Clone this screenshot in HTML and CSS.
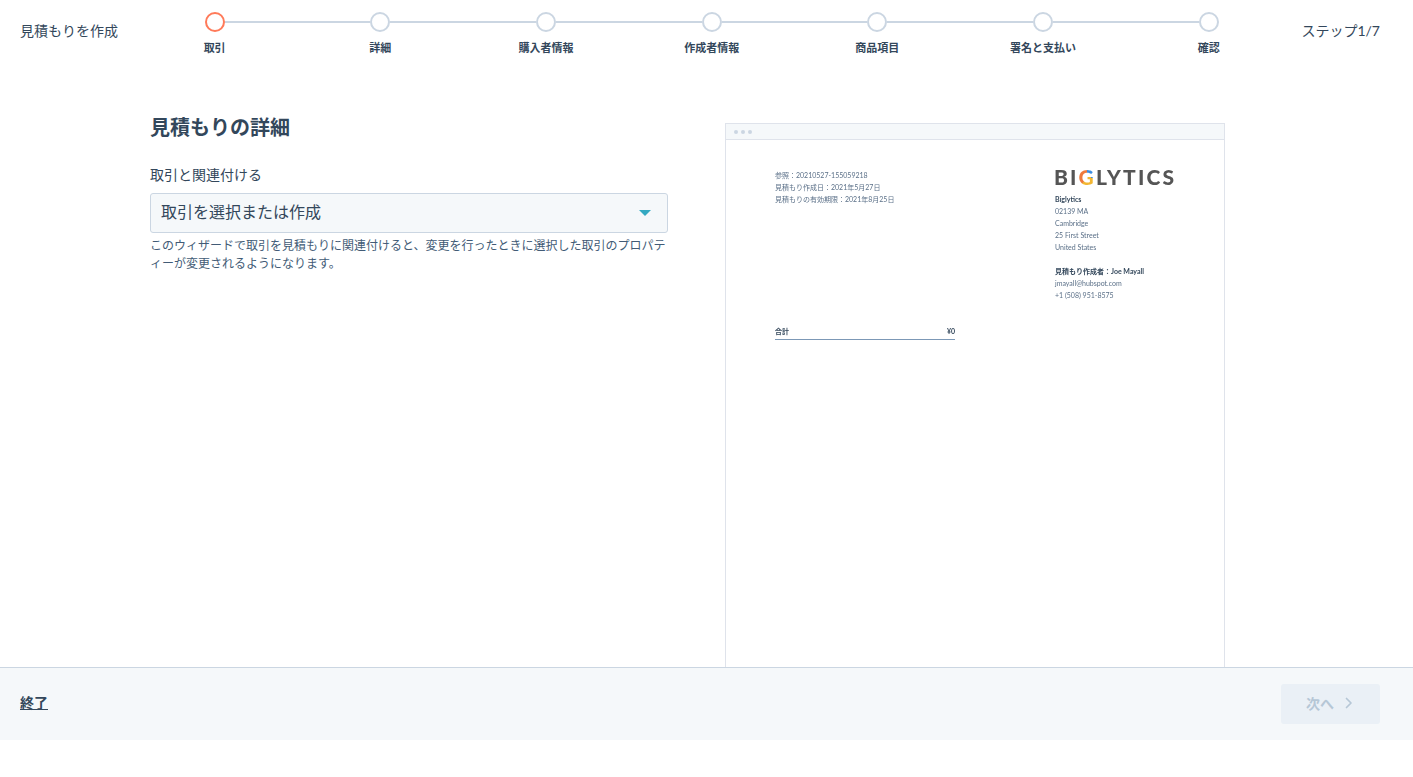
FILE: index.html
```html
<!DOCTYPE html>
<html lang="ja">
<head>
<meta charset="utf-8">
<title>見積もりを作成</title>
<link rel="stylesheet" href="styles.css">
</head>
<body>
<div class="app">
  <header class="top">
    <div class="top-title">見積もりを作成</div>
    <ol class="stepper">
      <li class="step current"><span class="dot"></span><span class="step-label">取引</span></li>
      <li class="step"><span class="dot"></span><span class="step-label">詳細</span></li>
      <li class="step"><span class="dot"></span><span class="step-label">購入者情報</span></li>
      <li class="step"><span class="dot"></span><span class="step-label">作成者情報</span></li>
      <li class="step"><span class="dot"></span><span class="step-label">商品項目</span></li>
      <li class="step"><span class="dot"></span><span class="step-label">署名と支払い</span></li>
      <li class="step"><span class="dot"></span><span class="step-label">確認</span></li>
    </ol>
    <div class="top-count">ステップ1/7</div>
  </header>
  <main class="main">
    <section class="form">
      <h1 class="form-title">見積もりの詳細</h1>
      <label class="field-label">取引と関連付ける</label>
      <div class="select">
        <span class="select-text">取引を選択または作成</span>
        <span class="caret"></span>
      </div>
      <p class="help">このウィザードで取引を見積もりに関連付けると、変更を行ったときに選択した取引のプロパティーが変更されるようになります。</p>
    </section>
    <section class="preview">
      <div class="chrome"><i></i><i></i><i></i></div>
      <div class="doc">
        <div class="doc-top">
          <div class="doc-meta">
            <div>参照：20210527-155059218</div>
            <div>見積もり作成日：2021年5月27日</div>
            <div>見積もりの有効期限：2021年8月25日</div>
          </div>
          <div class="doc-company">
            <div class="logo">BI<span class="logo-g">G</span>LYTICS</div>
            <div class="strong">Biglytics</div>
            <div>02139 MA</div>
            <div>Cambridge</div>
            <div>25 First Street</div>
            <div>United States</div>
            <div class="strong gap">見積もり作成者：Joe Mayall</div>
            <div>jmayall@hubspot.com</div>
            <div>+1 (508) 951-8575</div>
          </div>
        </div>
        <div class="total"><span>合計</span><span>¥0</span></div>
      </div>
    </section>
  </main>
  <footer class="bottom">
    <a class="quit" href="#">終了</a>
    <div class="next">次へ
      <svg class="chev" width="8" height="12" viewBox="0 0 8 12"><path d="M1.5 1.5 6 6l-4.500 4.500" fill="none" stroke="currentColor" stroke-width="1.700" stroke-linecap="round" stroke-linejoin="round"/></svg>
    </div>
  </footer>
</div>
</body>
</html>
```
FILE: styles.css
```css
* { box-sizing: border-box; }
html, body { margin: 0; padding: 0; background: #fff; }
body {
  height: 777px;
  overflow: hidden;
  font-family: "Lato", "Noto Sans CJK JP", sans-serif;
  color: #33475b;
}
.app { height: 740px; display: flex; flex-direction: column; }

.top { height: 62px; display: flex; flex: none; padding: 0 33px 0 20px; }
.top-title { width: 111.800px; padding-top: 21px; font-size: 14px; line-height: 20px; flex: none; }
.stepper { list-style: none; margin: 0; padding: 12px 0 0; width: 1159.670px; display: flex; flex: none; }
.step { flex: 1 1 0; display: flex; flex-direction: column; align-items: center; position: relative; }
.step:not(:last-child)::after {
  content: "";
  position: absolute;
  left: calc(50% + 10px);
  width: calc(100% - 20px);
  top: 9px;
  height: 2px;
  background: #cbd6e2;
}
.dot { width: 20px; height: 20px; border-radius: 50%; border: 2px solid #cbd6e2; background: #fff; }
.current .dot { border-color: #ff7a59; }
.step-label { margin-top: 8px; font-size: 11px; line-height: 16px; font-weight: 700; white-space: nowrap; }
.top-count { margin-left: auto; padding-top: 21px; font-size: 14px; line-height: 20px; white-space: nowrap; }

.main { flex: 1; min-height: 0; overflow: hidden; display: flex; padding-left: 150px; }
.form { width: 518px; flex: none; }
.form-title { margin: 52px 0 0; font-size: 20px; line-height: 26px; font-weight: 700; }
.field-label { display: block; margin-top: 25px; font-size: 14px; line-height: 20px; }
.select {
  margin-top: 8px;
  height: 40px;
  display: flex;
  align-items: center;
  justify-content: space-between;
  padding: 0 16px 0 10px;
  background: #f5f8fa;
  border: 1px solid #cbd6e2;
  border-radius: 3px;
  font-size: 16px;
}
.select-text { padding-bottom: 4px; }
.caret { width: 0; height: 0; border-left: 6px solid transparent; border-right: 6px solid transparent; border-top: 6px solid #34a9c1; }
.help { margin: 4px 0 0; font-size: 12px; line-height: 18px; color: #425b76; }

.preview { width: 500px; flex: none; margin: 61px 0 0 57px; border: 1px solid #dfe3eb; border-bottom: 0; }
.chrome { height: 16px; display: flex; align-items: center; gap: 3px; padding: 0 8px; background: #f5f8fa; border-bottom: 1px solid #dfe3eb; }
.chrome i { width: 4px; height: 4px; border-radius: 50%; background: #cbd6e2; }
.doc { padding: 26px 49px; font-size: 7px; line-height: 12px; color: #5b7088; filter: blur(0.35px); }
.doc-top { display: flex; justify-content: space-between; }
.doc-meta { padding-top: 3px; }
.doc-company { width: 120px; }
.logo { font-size: 21px; line-height: 21px; font-weight: 900; letter-spacing: 2.150px; color: #555; margin: 0 0 6px -1px; white-space: nowrap; }
.logo-g { background: conic-gradient(#3b8de0 0 30%, #f2b632 30% 60%, #ee7a3c 60%); -webkit-background-clip: text; background-clip: text; color: transparent; }
.strong { font-weight: 700; color: #33475b; }
.gap { margin-top: 12px; }
.total { width: 180px; margin-top: 24px; padding-bottom: 2px; display: flex; justify-content: space-between; font-weight: 700; color: #33475b; border-bottom: 1px solid #7c98b6; }

.bottom { height: 73px; flex: none; display: flex; align-items: center; justify-content: space-between; padding: 0 33px 0 20px; background: #f5f8fa; border-top: 1px solid #cbd6e2; }
.quit { margin-bottom: 5px; font-size: 14px; font-weight: 700; color: #33475b; text-decoration: underline; }
.next { width: 99px; height: 40px; display: flex; align-items: center; justify-content: center; gap: 11px; padding: 0 2px 2px 0; background: #eaf0f6; border-radius: 3px; color: #b6c7d6; font-size: 14px; font-weight: 700; }
.chev { flex: none; }
```
